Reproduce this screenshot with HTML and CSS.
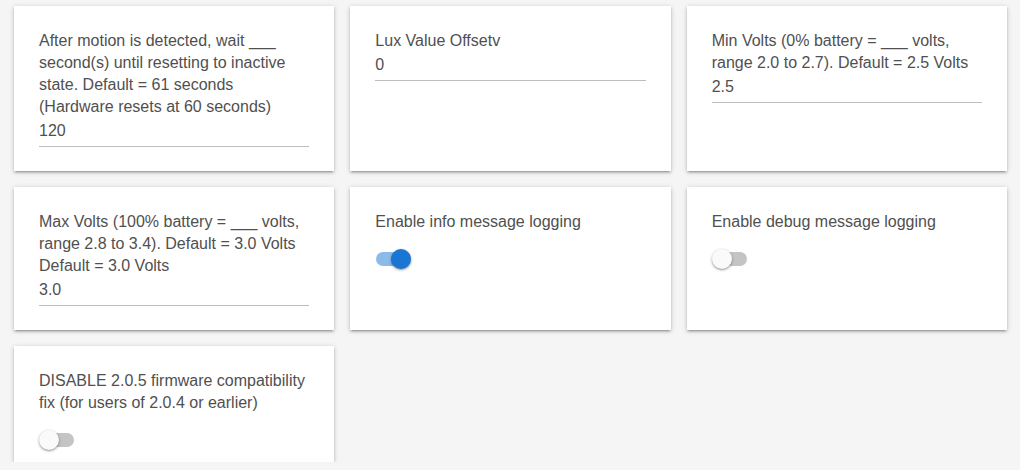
FILE: index.html
```html
<!DOCTYPE html>
<html lang="en">
<head>
    <meta charset="UTF-8">
    <meta name="viewport" content="width=device-width, initial-scale=1.0">
    <title>Device Preferences</title>
    <link rel="stylesheet" href="styles.css">
</head>
<body>
    <div class="grid">
        <div class="card">
            <label class="label" for="motion">After motion is detected, wait ___ second(s) until resetting to inactive state. Default = 61 seconds (Hardware resets at 60 seconds)</label>
            <div class="value" id="motion">120</div>
        </div>

        <div class="card">
            <label class="label" for="lux">Lux Value Offsetv</label>
            <div class="value" id="lux">0</div>
        </div>

        <div class="card">
            <label class="label" for="minv">Min Volts (0% battery = ___ volts, range 2.0 to 2.7). Default = 2.5 Volts</label>
            <div class="value" id="minv">2.5</div>
        </div>

        <div class="card">
            <label class="label" for="maxv">Max Volts (100% battery = ___ volts, range 2.8 to 3.4). Default = 3.0 Volts Default = 3.0 Volts</label>
            <div class="value" id="maxv">3.0</div>
        </div>

        <div class="card card-switch">
            <div class="label">Enable info message logging</div>
            <div class="switch on">
                <span class="track"></span>
                <span class="thumb"></span>
            </div>
        </div>

        <div class="card card-switch">
            <div class="label">Enable debug message logging</div>
            <div class="switch">
                <span class="track"></span>
                <span class="thumb"></span>
            </div>
        </div>

        <div class="card card-switch">
            <div class="label">DISABLE 2.0.5 firmware compatibility fix (for users of 2.0.4 or earlier)</div>
            <div class="switch">
                <span class="track"></span>
                <span class="thumb"></span>
            </div>
        </div>
    </div>
</body>
</html>
```

FILE: styles.css
```css
body {
    margin: 0;
    background-color: #f5f5f5;
    font-family: "Liberation Sans", Arial, sans-serif;
    font-size: 16px;
    line-height: 22px;
    color: #505050;
}

.grid {
    display: grid;
    grid-template-columns: repeat(3, 1fr);
    gap: 16px;
    padding: 6px 13px 0 14px;
}

.card {
    background-color: #fff;
    padding: 24px 25px;
    box-shadow: 0 2px 2px rgba(0, 0, 0, 0.14), 0 3px 1px -2px rgba(0, 0, 0, 0.12), 0 1px 5px rgba(0, 0, 0, 0.2);
}

.card-switch {
    padding-bottom: 12px;
}

.label {
    display: block;
}

.value {
    margin-top: 2px;
    padding-bottom: 4px;
    border-bottom: 1px solid #bdbdbd;
}

.switch {
    position: relative;
    width: 36px;
    height: 20px;
    margin-top: 16px;
}

.switch .track {
    position: absolute;
    left: 1px;
    top: 3px;
    width: 34px;
    height: 14px;
    border-radius: 7px;
    background-color: #c4c4c4;
}

.switch .thumb {
    position: absolute;
    left: 0;
    top: 0;
    width: 20px;
    height: 20px;
    border-radius: 50%;
    background-color: #fafafa;
    box-shadow: 0 1px 3px rgba(0, 0, 0, 0.35), 0 1px 1px rgba(0, 0, 0, 0.14);
}

.switch.on .track {
    background-color: #8cbbe9;
}

.switch.on .thumb {
    left: 16px;
    background-color: #1976d2;
}
```
